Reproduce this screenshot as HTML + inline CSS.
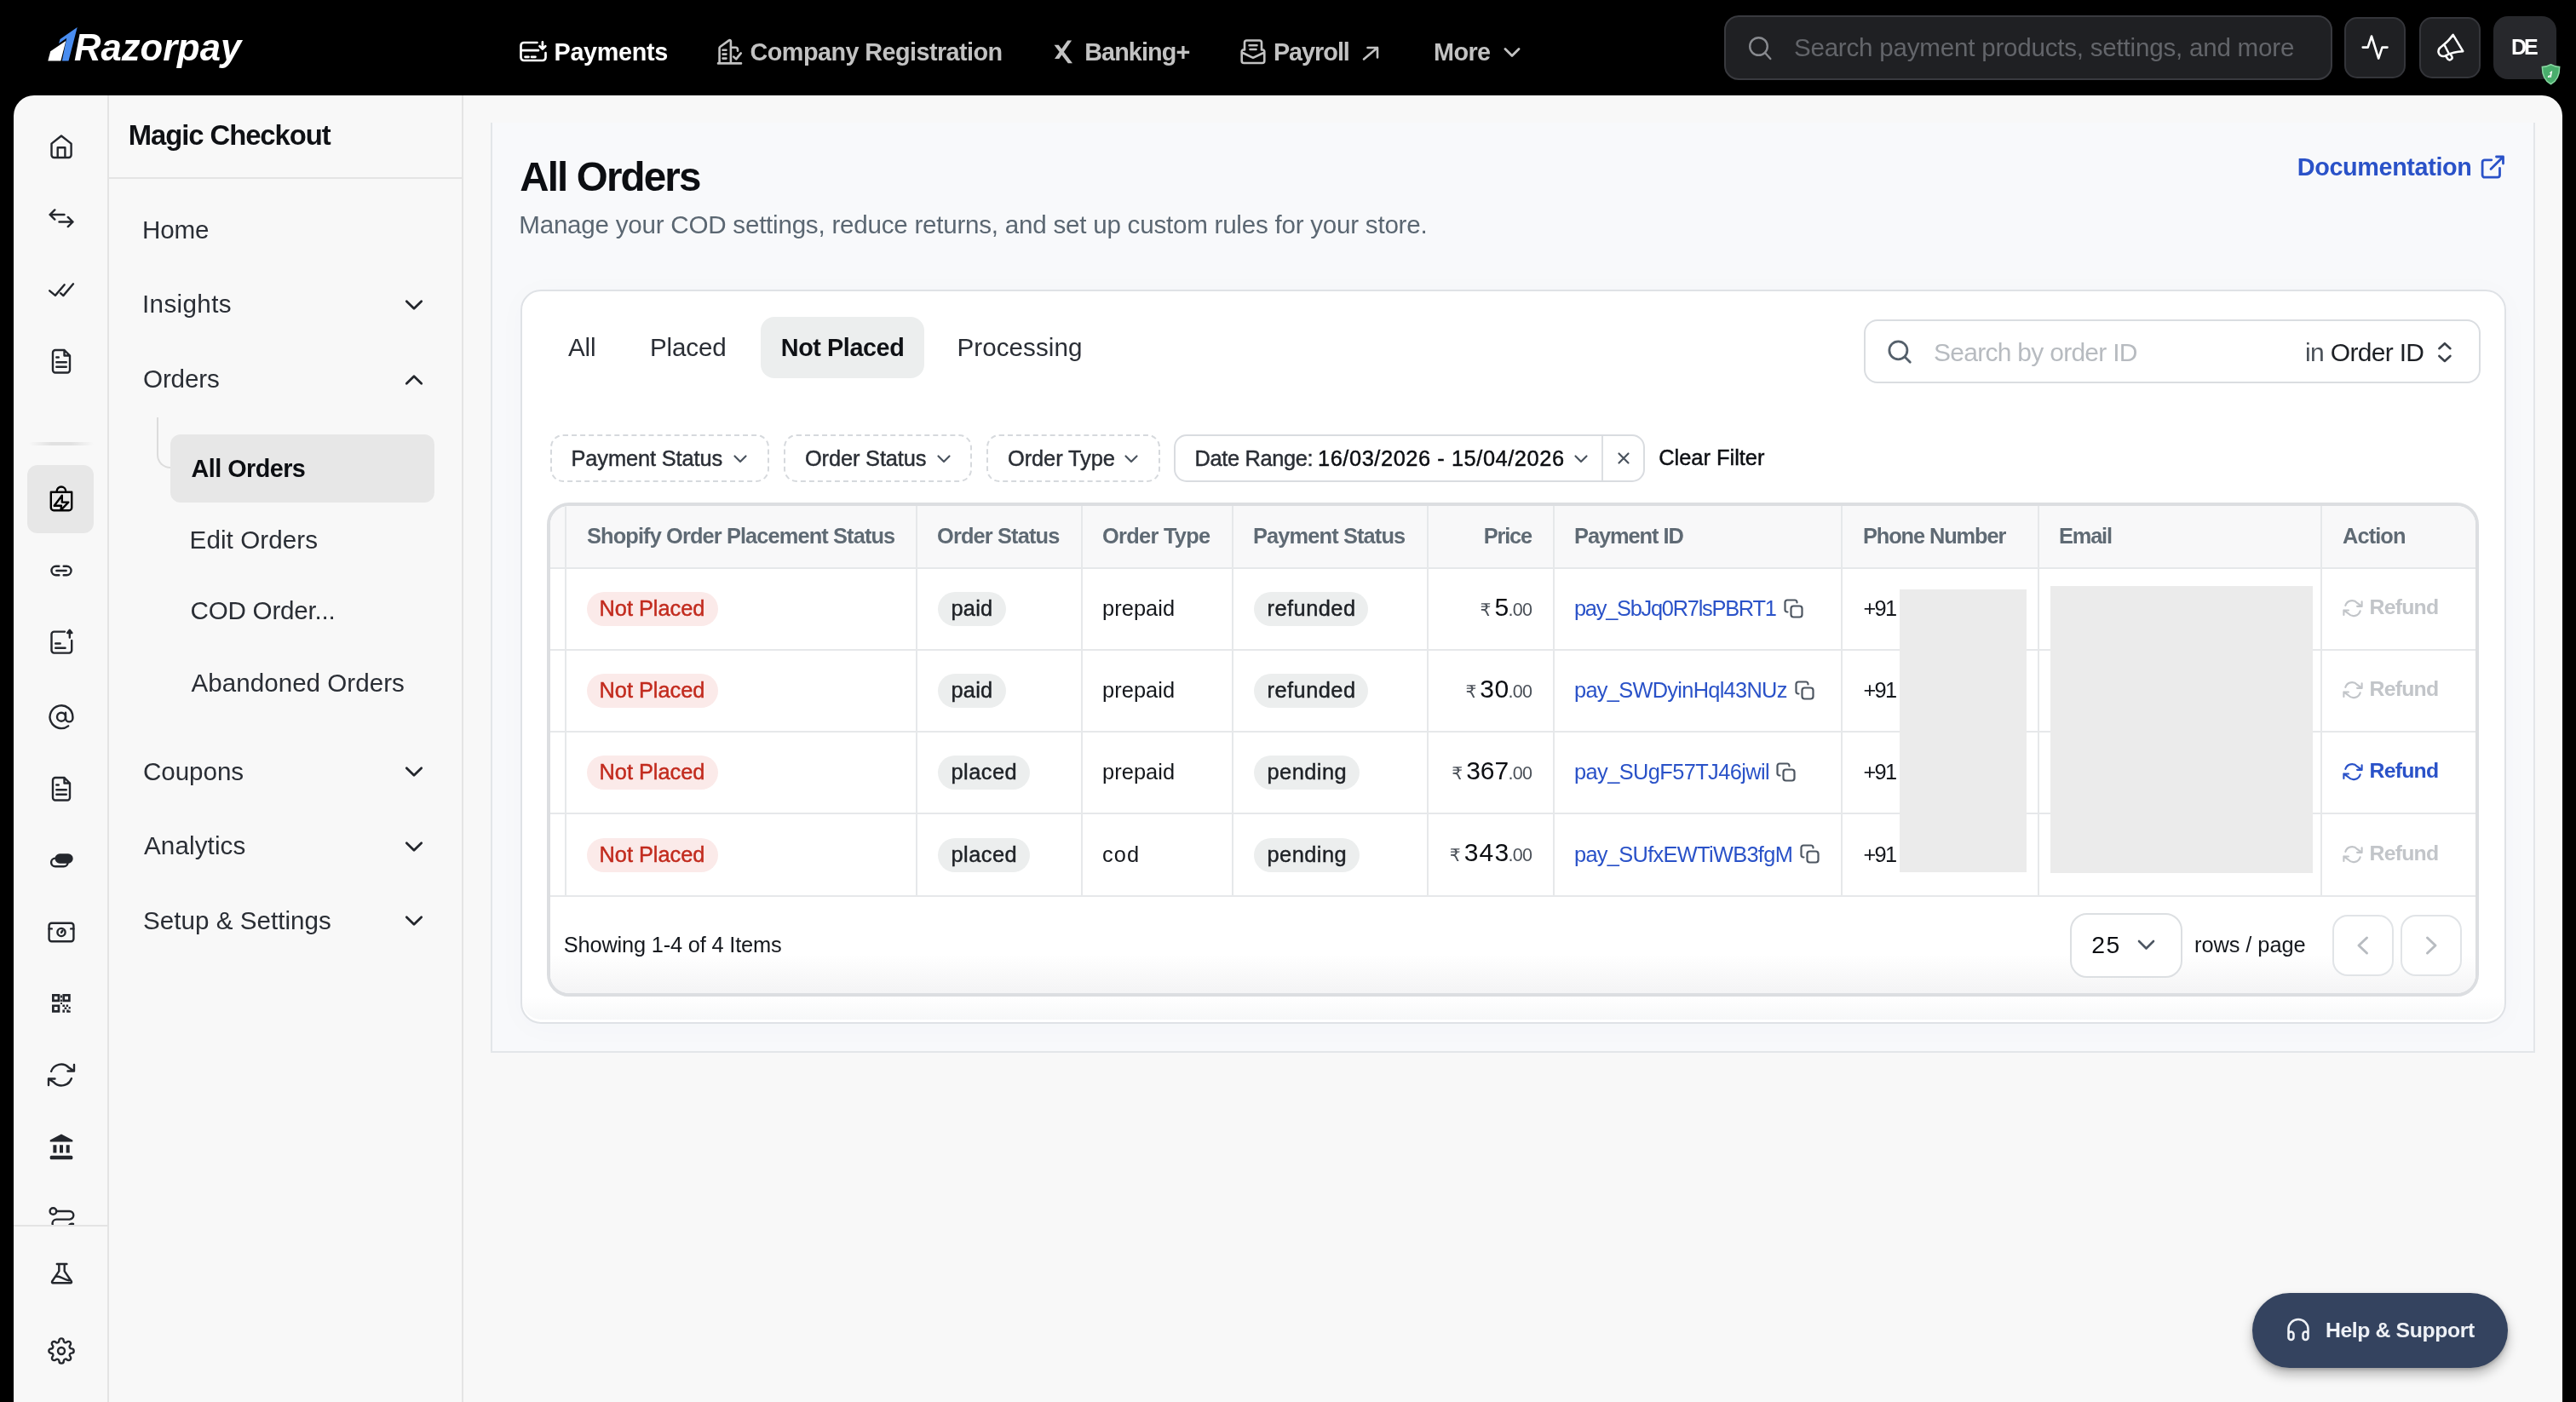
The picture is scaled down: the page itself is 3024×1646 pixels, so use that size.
<!DOCTYPE html>
<html lang="en">
<head>
<meta charset="utf-8">
<title>Magic Checkout - All Orders</title>
<style>
*{box-sizing:border-box;margin:0;padding:0}
html,body{width:3024px;height:1646px;overflow:hidden;background:#000}
body{font-family:"Liberation Sans","DejaVu Sans",sans-serif;color:#1b1e24;position:relative;-webkit-font-smoothing:antialiased;will-change:transform}
@media (max-width:1600px){html{zoom:.5}}
svg{display:block;overflow:visible}
button{font-family:inherit;border:none;text-align:left}
.ic{fill:none;stroke:currentColor;stroke-width:2;stroke-linecap:round;stroke-linejoin:round}
span{white-space:nowrap}
.md{-webkit-text-stroke:0.45px currentColor}

/* ---------- top bar ---------- */
#topbar{position:absolute;left:0;top:0;width:3024px;height:112px;background:#000;color:#fff}
#logo{position:absolute;left:55px;top:30px;width:236px;height:56px}
#logo .wm{position:absolute;left:32px;top:-2px;font-size:43.600px;line-height:56px;font-weight:bold;font-style:italic;color:#fff}
#topnav{position:absolute;left:0;top:0;height:112px;width:100%}
#topnav .ni{position:absolute;top:38px;height:46px;color:#c2c2c2;font-size:28.800px;line-height:46px;font-weight:bold;white-space:nowrap}
#topnav .ni.on{color:#fff}
#topnav .ni svg{position:absolute}
#gsearch{position:absolute;left:2024px;top:18px;width:714px;height:76px;border-radius:17px;background:#1f2023;border:2px solid #393a3f;color:#63656a;font-size:29.600px}
#gsearch svg{position:absolute;left:25px;top:20.500px;color:#888a8f}
#gsearch .t{position:absolute;left:80.900px;top:18px;line-height:36px}
.tbtn{position:absolute;top:20px;width:72px;height:72px;border-radius:15px;background:#1f2023;border:2px solid #34353a;color:#fff}
.tbtn svg{position:absolute;left:18px;top:18px}
#avatar{position:absolute;left:2927px;top:19px;width:74px;height:74px;border-radius:17px;background:#27282c;color:#fff;font-weight:bold;font-size:25px;line-height:73px;text-align:center}
#shield{position:absolute;left:2983px;top:75px;width:23px;height:24.500px}

/* ---------- shell ---------- */
#shell{position:absolute;left:16px;top:112px;width:2992px;height:1534px;background:#f8f8f8;border-radius:24px 24px 0 0;overflow:hidden}
#rail{position:absolute;left:0;top:0;width:112px;height:1534px;border-right:2px solid #e4e4e4}
#rail .ri{position:absolute;left:38px;width:36px;height:36px;color:#24272d;stroke-width:2.400}
#rail .act{position:absolute;left:16px;top:434px;width:78px;height:80px;border-radius:12px;background:#e7e7e7}
#rail .sep{position:absolute;left:18px;top:407px;width:76px;height:4px;border-radius:2px;background:linear-gradient(90deg,rgba(226,226,226,0),#e1e1e1 35%,#e1e1e1 65%,rgba(226,226,226,0))}
#railfoot{position:absolute;left:0;top:1326px;width:110px;height:208px;background:#f8f8f8;border-top:2px solid #e4e4e4}

#side{position:absolute;left:112px;top:0;width:416px;height:1534px;border-right:2px solid #e4e4e4}
#side h2{position:absolute;left:24.700px;top:27.200px;font-size:32.800px;line-height:40px;font-weight:bold;color:#0f1115;white-space:nowrap}
#side .hb{position:absolute;left:0;top:96px;width:414px;height:2px;background:#e4e4e4}
#side .mi{position:absolute;left:41px;font-size:29.600px;line-height:36px;color:#2a2e35;white-space:nowrap}
#side .si{position:absolute;left:96.600px;font-size:29.600px;line-height:36px;color:#2a2e35;white-space:nowrap}
#side .chev{position:absolute;left:344px;width:28px;height:28px;color:#24272d;stroke-width:2.800}
#side .sel{position:absolute;left:72px;top:398px;width:310px;height:80px;border-radius:12px;background:#e7e7e7}
#side .tree{position:absolute;left:56px;top:378px;width:16px;height:60px;border-left:2px solid #dcdcdc;border-bottom:2px solid #dcdcdc;border-bottom-left-radius:16px}

/* ---------- content ---------- */
#wrap{position:absolute;left:560px;top:32px;width:2400px;height:1092px;background:#f8f9fb;border:2px solid #e3e6e9;border-top:none}
#wrap h1{position:absolute;left:33.250px;top:35.500px;font-size:47.500px;line-height:56px;font-weight:bold;color:#0c0e12;white-space:nowrap}
#wrap .sub{position:absolute;left:33.250px;top:101.700px;font-size:29.600px;line-height:36px;color:#5b6772;white-space:nowrap}
#doc{position:absolute;right:73.700px;top:32px;height:40px;color:#2a52c8;font-weight:bold;font-size:28.800px;line-height:40px;white-space:nowrap}
#doc svg{position:absolute;right:-41px;top:5px}

#card{position:absolute;left:33px;top:196px;width:2331px;height:862px;background:linear-gradient(#fff 828px,#f6f7f8);border:2px solid #dfe2e6;border-radius:24px;box-shadow:0 4px 36px rgba(60,80,110,.025),inset 0 -3px 0 #fff}
.tab{position:absolute;top:30px;height:72px;line-height:72px;font-size:29.600px;color:#2a2e35;white-space:nowrap}
.tab.on{background:#eceeee;border-radius:16px;font-weight:bold;font-size:28.800px;color:#0f1115;text-align:center}
#osearch{position:absolute;left:1575px;top:33px;width:724px;height:75px;border-radius:16px;border:2px solid #dadde1;background:#fff}
#osearch svg.s{position:absolute;left:25px;top:21px;color:#55606b}
#osearch .ph{position:absolute;left:81.100px;top:17.500px;font-size:30px;line-height:38px;color:#b7bbc0}
#osearch .in{position:absolute;left:518.100px;top:17.500px;font-size:30px;line-height:38px;color:#1d2025}
#osearch svg.u{position:absolute;left:671px;top:22.600px;color:#3c424a}

.chip{position:absolute;top:168px;height:56px;border-radius:15px;border:2px dashed #d6d9dd;font-size:25.400px;line-height:50px;color:#2a2e35;white-space:nowrap}
.chip>span{position:absolute;left:24.500px;top:1px}
.chip svg{position:absolute;top:21.500px;color:#4a535e;stroke-width:2.200}
.chip.solid{border:2px solid #d9dce0}

/* table */
#tbl{position:absolute;left:29px;top:248px;width:2268px;height:580px;border:4px solid #dcdee1;border-radius:26px;background:#fff;overflow:hidden}
table{border-collapse:separate;border-spacing:0;table-layout:fixed;width:2260px;position:absolute;left:0;top:0}
th,td{border-right:2px solid #e6e8ea;border-bottom:2px solid #e6e8ea;text-align:left;vertical-align:middle;padding:0 0 0 24px;white-space:nowrap;overflow:hidden}
th{height:74px;background:#f8f8f9;color:#5f6a74;font-size:25.400px;font-weight:bold;padding-bottom:1px}
td{height:96px;font-size:25.400px;color:#15181d;line-height:40px;padding-bottom:2px}
th:last-child,td:last-child{border-right:none}
tr.last td{height:97px}
th.r{text-align:right;padding:0 24px 1px 0}
td.r{text-align:right;padding:0 24px 2px 0}
.bd{display:inline-block;height:40px;line-height:39px;border-radius:20px;padding:0 16.500px;font-size:25.400px;vertical-align:middle}
.bd.red{background:#fbeae9;color:#c22b1e}
.bd.gr{background:#eceeee;color:#1d2025}
.pid{color:#2a52c8;display:inline-flex;align-items:center}
.pid svg{margin-left:9px;color:#4d5661;position:relative;top:0.500px}
.rf{display:inline-flex;align-items:center;color:#c2c5c9;font-weight:bold;font-size:24.800px}
.rf.on{color:#2a52c8}
.rf svg{margin-right:8.500px;position:relative;left:0;top:1px}
.pr{display:inline-block;white-space:nowrap}
.pr .cu{font-size:20.300px;color:#4a5058;margin-right:5px;font-family:"DejaVu Sans",sans-serif}
.pr .iv{font-size:30px;color:#0c0e12}
.pr .dc{font-size:21.500px;color:#4a5058;margin-left:1px}
.red1{position:absolute;left:1583.500px;top:98px;width:149px;height:332px;background:#ebebeb}
.red2{position:absolute;left:1760.700px;top:93.500px;width:308px;height:337px;background:#ebebeb}
#tfoot{position:absolute;left:0;top:459px;width:2260px;height:113px;background:linear-gradient(#fff 60%,#f4f4f5)}
#tfoot .sh{position:absolute;left:16.800px;top:40px;font-size:25.400px;line-height:32px;color:#15181d}
#tfoot .sel{position:absolute;left:1783.500px;top:19px;width:132px;height:76px;border-radius:20px;border:2px solid #dcdfe2;background:#fff;font-size:28.400px;line-height:71px;color:#0c0e12}
#tfoot .sel span{position:absolute;left:24.750px;top:0}
#tfoot .sel svg{position:absolute;left:77.750px;top:29px;color:#4d5662}
#tfoot .rp{position:absolute;left:1931px;top:40.200px;font-size:25.400px;line-height:32px;color:#15181d}
.pb{position:absolute;top:21px;width:71.500px;height:72px;border-radius:18px;border:2px solid #e1e4e7;background:#fff;color:#b8bcc1}
.pb svg{position:absolute;left:20px;top:20px}

#help{position:absolute;left:2644px;top:1518px;width:300px;height:88px;border-radius:44px;background:#34435f;color:#eef1f6;font-weight:bold;font-size:24.800px;line-height:88px;box-shadow:0 8px 14px rgba(0,0,0,.26),0 2px 4px rgba(0,0,0,.18)}
#help svg{position:absolute;left:40px;top:29px}
#help span{position:absolute;left:86.900px;top:0}
</style>
</head>
<body>
<header id="topbar">
  <div id="logo">
    <svg width="236" height="56" viewBox="55 30 236 56" style="position:absolute;left:0;top:0">
      <polygon points="90.7,32 70.5,45.9 69.1,50.9 78.2,44.8 72.8,71.5 80.5,71.5" fill="#4a8df0"/>
      <polygon points="56.3,71.5 59.2,60.2 77.3,48 71.4,71.5" fill="#fff"/>
    </svg>
    <span class="wm"><span style="letter-spacing:0.00px;margin:0 2.75px 0 0.00px">Razorpay</span></span>
  </div>
  <nav id="topnav">
    <div class="ni on" style="left:610px;padding-left:41.600px">
      <svg width="34" height="28" viewBox="609 46 34 28" class="ic" style="left:-1px;top:8px;stroke-width:2.700"><path d="M630.500 50H615a3.500 3.500 0 0 0-3.500 3.500v14a3.500 3.500 0 0 0 3.500 3.500h22a3.500 3.500 0 0 0 3.500-3.500V62.200M611.500 59.200h20.500M616.500 66.800h4M624 66.800h4.500M636.900 49.300v7.500M633.500 54.300l3.400 3.300 3.400-3.300"/></svg>
      <span style="letter-spacing:-0.35px;margin:0 -0.67px 0 -1.00px">Payments</span></div>
    <div class="ni" style="left:842px;padding-left:39.600px">
      <svg width="32" height="32" viewBox="840 44 32 32" class="ic" style="left:-2px;top:6px;stroke-width:2.600"><path d="M843 74.400h27M844.600 74V56.200a1.500 1.500 0 0 1 .7-1.200l10.500-7.600a1.300 1.300 0 0 1 2.100 1V74M858 55.800h5.500a2.500 2.500 0 0 1 2.500 2.500v1.400M861.200 66.600l3 2.800 5.600-7M848.500 58.800h4M848.500 63.600h4M848.500 68.600h4"/></svg>
      <span style="letter-spacing:-0.56px;margin:0 -1.03px 0 -1.00px">Company Registration</span></div>
    <div class="ni" style="left:1237px;padding-left:37.200px">
      <svg width="26" height="30" viewBox="1236 46 26 30" style="left:-1px;top:8px"><path fill="currentColor" d="M1253.200 47.500h4.900l-14.800 21.500h-5.300zM1237.500 52.700h5.200l16.300 21.600h-5.200z"/></svg>
      <span style="letter-spacing:-0.91px;margin:0 0.10px 0 -1.00px">Banking+</span></div>
    <div class="ni" style="left:1456px;padding-left:39.900px">
      <svg width="34" height="34" viewBox="1454 44 34 34" class="ic" style="left:-2px;top:6px;stroke-width:2.600"><path d="M1461 58.500V50a2.500 2.500 0 0 1 2.500-2.500h15a2.500 2.500 0 0 1 2.500 2.500v8.500M1457.700 61.500l13.300 6.300 13.300-6.300M1457.700 61.500a2.500 2.500 0 0 1 3.300-3M1484.300 61.500a2.500 2.500 0 0 0-3.300-3M1457.700 61.500V71.500a2.500 2.500 0 0 0 2.500 2.500h21.600a2.500 2.500 0 0 0 2.500-2.500V61.500M1466.500 53.200h9M1467.500 58h7"/></svg>
      <span style="letter-spacing:-1.01px;margin:0 -0.99px 0 -1.00px">Payroll</span>
      <svg width="22" height="18" viewBox="1598 54 22 18" class="ic" style="left:142px;top:16px;stroke-width:2.600"><path d="M1601 69.500l16-13.500M1605.500 56h11.500v11.500"/></svg>
    </div>
    <div class="ni" style="left:1684px">
      <span style="letter-spacing:-0.59px;margin:0 0.58px 0 -1.00px">More</span>
      <svg width="22" height="14" viewBox="1764 54 22 14" class="ic" style="left:80px;top:16px;stroke-width:2.800"><path d="M1767 57.500l8 8 8-8"/></svg>
    </div>
  </nav>
  <div id="gsearch">
    <svg width="32" height="32" viewBox="0 0 32 32" class="ic" style="stroke-width:2.400"><circle cx="13.500" cy="13.500" r="10.300"/><path d="M21 21l6.300 7"/></svg>
    <span class="t"><span style="letter-spacing:-0.23px;margin:0 -0.23px 0 -1.00px">Search payment products, settings, and more</span></span>
  </div>
  <div class="tbtn" style="left:2752px"><svg width="36" height="36" viewBox="2770 36 36 36" class="ic" style="stroke-width:2.600;left:16px;top:15px"><path d="M2773.700 54.600h6l4.300-13.100 8.200 26.100 4.300-13h6"/></svg></div>
  <div class="tbtn" style="left:2840px"><svg width="36" height="36" viewBox="2858 36 36 36" class="ic" style="stroke-width:2.500;left:16px;top:14px"><path d="M2879.700 40.800L2891.300 60.200Q2880 60.500 2870.300 65.600Q2865.500 67.300 2863.100 63Q2860.800 58 2866.600 54.200Q2874.500 48.500 2879.700 40.800zM2869.800 53.200l5 9.800M2871 65.800l2.800 3.900q1.500 1.400 3.500 .100q2.200-1.500 1-3.500l-1.700-2.700"/></svg></div>
  <div id="avatar"><span style="letter-spacing:-3.05px;margin:0 2.38px 0 -1.00px">DE</span>
  </div>
  <svg id="shield" viewBox="0 0 24 26"><path d="M12 .8c3.500 2 6.800 2.800 10.800 2.800 0 9.500-2.500 17.200-10.800 21.600C3.700 20.800 1.200 13.100 1.200 3.600 5.200 3.600 8.500 2.800 12 .8z" fill="#49ad6c" stroke="#86d6a0" stroke-width="1.600"/><path d="M13.800 8.500l-3.400 2.400-.3 1.200 1.600-1.100-.9 6h1.500zM8 17l.5-1.900 2.500-1.700-.8 3.600z" fill="#fff"/></svg>
</header>

<div id="shell">
<nav id="rail">
  <svg class="ri ic" style="top:42px" viewBox="54 154 36 36"><path d="M60.500 168.600L72 159.500l11.600 9.100V182a3 3 0 0 1-3 3H63.500a3 3 0 0 1-3-3zM67.700 185v-11.700h8.700V185"/></svg>
  <svg class="ri ic" style="top:126px" viewBox="54 238 36 36"><path d="M75.500 252H58.600M64.300 246.400L58.600 252l5.700 5.600M69.500 260.500h16M79.800 254.900l5.700 5.600-5.700 5.600"/></svg>
  <svg class="ri ic" style="top:210px" viewBox="54 322 36 36"><path d="M58.200 341.300l6.700 5.600 10.800-12.600M71 344.200l3.300 2.900 11.700-13.800"/></svg>
  <svg class="ri ic" style="top:294px" viewBox="54 406 36 36"><path d="M75.500 411H65a3 3 0 0 0-3 3v20.500a3 3 0 0 0 3 3h14a3 3 0 0 0 3-3V417.500zM75.500 411v6.500H82M66.300 419.500h2.500M66.300 425.300h11.500M66.300 430.800h11.500"/></svg>
  <div class="sep"></div>
  <div class="act"></div>
  <svg class="ri ic" style="top:456px;color:#000" viewBox="54 568 36 36"><path d="M59.800 577.800h24.400V596a3.200 3.200 0 0 1-3.200 3.200H63a3.200 3.200 0 0 1-3.200-3.200zM66.600 577.800v-1a5.300 5.300 0 0 1 10.600 0v1M72.800 581.800L63.700 593.700H72l-.5 5.300 8.800-9.400h-7.500z"/></svg>
  <svg class="ri ic" style="top:540px" viewBox="54 652 36 36"><path d="M69.300 664.800h-3.600a5.250 5.250 0 0 0 0 10.500h3.600M74.700 664.800h3.600a5.250 5.250 0 0 1 0 10.500h-3.600M66.300 670h11.400"/></svg>
  <svg class="ri ic" style="top:624px" viewBox="54 736 36 36"><path d="M76 741.600H63.500a3 3 0 0 0-3 3v19a3 3 0 0 0 3 3h17.700a3 3 0 0 0 3-3V752M81.800 748.500v-8M65.200 755.500h5.500M65.200 760.700h11.400"/><path d="M79.200 743l2.600-3.200 2.600 3.200z" fill="currentColor"/></svg>
  <svg class="ri ic" style="top:708px" viewBox="54 820 36 36"><circle cx="72" cy="841.700" r="5"/><path d="M77 836.700v6.500a4.200 4.200 0 0 0 8.400 0v-1.500a13.400 13.400 0 1 0-5.250 10.640"/></svg>
  <svg class="ri ic" style="top:792px" viewBox="54 904 36 36"><path d="M75.500 913H65a3 3 0 0 0-3 3v20.500a3 3 0 0 0 3 3h14a3 3 0 0 0 3-3V919.500zM75.500 913v6.500H82M66.300 921.500h2.500M66.300 927.300h11.500M66.300 932.800h11.500"/></svg>
  <svg class="ri ic" style="top:876px" viewBox="54 988 36 36"><rect x="60.100" y="1007.600" width="19.500" height="9.600" rx="4.800"/><rect x="64.500" y="1002.300" width="21.200" height="11.400" rx="5.700" fill="currentColor" stroke="none"/></svg>
  <svg class="ri ic" style="top:960px" viewBox="54 1072 36 36"><rect x="57.600" y="1083.800" width="28.800" height="21.400" rx="3"/><circle cx="72" cy="1094.500" r="4.600"/><path d="M72 1094.700l1.500-2.200M57.600 1090.400h3.200M83.200 1090.400h3.200"/></svg>
  <svg class="ri" style="top:1048px;fill:currentColor" viewBox="54 1160 36 36"><path fill-rule="evenodd" d="M61 1167h9.300v9.300H61zm2.700 2.700v3.900h3.900v-3.900zM73.400 1167h9.300v9.300h-9.300zm2.700 2.700v3.900h3.900v-3.900zM61 1179.400h9.300v9.300H61zm2.700 2.700v3.900h3.900v-3.900z"/><path d="M70.900 1168.500h2v3h-2zM70.900 1173.500h2v2.500h-2zM73.400 1179.400h2.600v2.600h-2.600zM77.600 1179.400h2.500v2.600h-2.500zM80.600 1182h2.100v2.500h-2.100zM75.600 1182.500h2.600v2.600h-2.600zM73.400 1185.600h2.600v3.100h-2.600zM78.200 1185.600h2.500v3.100h-2.500zM80.700 1186.600h2v2.100h-2zM71 1177h2v2h-2z"/></svg>
  <svg class="ri ic" style="top:1132px" viewBox="54 1244 36 36"><path d="M87 1250v7.500h-7.500M57 1274v-7.500h7.500M60.100 1257.800a12.400 12.400 0 0 1 20.500-4.600l6.400 4.300M57 1266.500l6.400 4.300a12.400 12.400 0 0 0 20.500-4.600"/></svg>
  <svg class="ri" style="top:1216px;fill:currentColor" viewBox="54 1328 36 36"><path d="M72 1331.600l13.300 6.800v2.200H58.700v-2.200zM62.400 1344.200h4v9.200h-4zM70 1344.200h4v9.200h-4zM77.700 1344.200h4v9.200h-4z"/><rect x="58.700" y="1356.700" width="26.600" height="4.600" rx="1.500"/></svg>
  <svg class="ri ic" style="top:1300px" viewBox="54 1412 36 36"><circle cx="62.400" cy="1422" r="3.800"/><path d="M66.200 1422h15.300a4.800 4.800 0 0 1 0 9.600H66.300a4.800 4.800 0 0 0 0 9.600h9M80 1441a4.500 4.500 0 0 1 6-4"/></svg>
  <div id="railfoot">
    <svg class="ri ic" style="top:37px" viewBox="54 1477 36 36"><path d="M66.800 1484h11.600M69.300 1484v8.300l-8.200 12.200a1.200 1.200 0 0 0 1 1.800h20.800a1.200 1.200 0 0 0 1-1.800l-8.200-12.200V1484M65 1498.800c5-2 9 3.500 16 4.500"/></svg>
    <svg class="ri ic" style="top:130px;left:40px;width:32px;height:32px;stroke-width:1.800" viewBox="0 0 24 24"><circle cx="12" cy="12" r="3"/><path d="M19.400 15a1.650 1.650 0 0 0 .33 1.820l.06.06a2 2 0 0 1 0 2.830 2 2 0 0 1-2.830 0l-.06-.06a1.650 1.650 0 0 0-1.820-.33 1.650 1.650 0 0 0-1 1.510V21a2 2 0 0 1-2 2 2 2 0 0 1-2-2v-.09A1.650 1.650 0 0 0 9 19.400a1.650 1.650 0 0 0-1.820.33l-.06.06a2 2 0 0 1-2.830 0 2 2 0 0 1 0-2.830l.06-.06a1.650 1.650 0 0 0 .33-1.820 1.650 1.650 0 0 0-1.510-1H3a2 2 0 0 1-2-2 2 2 0 0 1 2-2h.09A1.650 1.650 0 0 0 4.600 9a1.650 1.650 0 0 0-.33-1.820l-.06-.06a2 2 0 0 1 0-2.830 2 2 0 0 1 2.830 0l.06.06a1.650 1.650 0 0 0 1.820.33H9a1.650 1.650 0 0 0 1-1.510V3a2 2 0 0 1 2-2 2 2 0 0 1 2 2v.09a1.650 1.650 0 0 0 1 1.510 1.650 1.650 0 0 0 1.820-.33l.06-.06a2 2 0 0 1 2.830 0 2 2 0 0 1 0 2.830l-.06.06a1.650 1.650 0 0 0-.33 1.820V9a1.650 1.650 0 0 0 1.510 1H21a2 2 0 0 1 2 2 2 2 0 0 1-2 2h-.09a1.650 1.650 0 0 0-1.510 1z"/></svg>
  </div>
</nav>
<aside id="side">
  <h2><span style="letter-spacing:-1.04px;margin:0 1.12px 0 -2.00px">Magic Checkout</span></h2>
  <div class="hb"></div>
  <div class="mi" style="top:139.700px"><span style="letter-spacing:-0.16px;margin:0 -0.30px 0 -2.00px">Home</span></div>
  <div class="mi" style="top:227.300px"><span style="letter-spacing:0.36px;margin:0 -1.16px 0 -2.00px">Insights</span></div>
  <svg class="chev ic" style="top:232px" viewBox="0 0 28 28"><path d="M5.300 9.700l8.700 8.600 8.700-8.600"/></svg>
  <div class="mi" style="top:315.300px"><span style="letter-spacing:-0.13px;margin:0 -0.67px 0 -1.00px">Orders</span></div>
  <svg class="chev ic" style="top:320px" viewBox="0 0 28 28"><path d="M5.300 18.300l8.700-8.600 8.700 8.600"/></svg>
  <div class="tree"></div>
  <div class="sel"></div>
  <div class="si" style="top:419.600px;font-weight:bold;font-size:28.800px;color:#0c0e12"><span style="letter-spacing:-0.55px;margin:0 -0.47px 0 0.00px">All Orders</span></div>
  <div class="si" style="top:503.700px"><span style="letter-spacing:0.07px;margin:0 -0.87px 0 -2.00px">Edit Orders</span></div>
  <div class="si" style="top:587.400px"><span style="letter-spacing:-0.24px;margin:0 -1.98px 0 -1.00px">COD Order...</span></div>
  <div class="si" style="top:671.700px"><span style="letter-spacing:0.01px;margin:0 -0.81px 0 0.00px">Abandoned Orders</span></div>
  <div class="mi" style="top:775.700px"><span style="letter-spacing:-0.06px;margin:0 -0.74px 0 -1.00px">Coupons</span></div>
  <svg class="chev ic" style="top:780px" viewBox="0 0 28 28"><path d="M5.300 9.700l8.700 8.600 8.700-8.600"/></svg>
  <div class="mi" style="top:863.300px"><span style="letter-spacing:0.11px;margin:0 -0.91px 0 0.00px">Analytics</span></div>
  <svg class="chev ic" style="top:868px" viewBox="0 0 28 28"><path d="M5.300 9.700l8.700 8.600 8.700-8.600"/></svg>
  <div class="mi" style="top:950.700px"><span style="letter-spacing:0.02px;margin:0 -0.82px 0 -1.00px">Setup &amp; Settings</span></div>
  <svg class="chev ic" style="top:955px" viewBox="0 0 28 28"><path d="M5.300 9.700l8.700 8.600 8.700-8.600"/></svg>
</aside>
<main id="wrap">
  <h1><span style="letter-spacing:-1.83px;margin:0 0.42px 0 -1.00px">All Orders</span></h1>
  <p class="sub"><span style="letter-spacing:-0.24px;margin:0 -1.98px 0 -2.00px">Manage your COD settings, reduce returns, and set up custom rules for your store.</span></p>
  <a id="doc"><span style="letter-spacing:-0.37px;margin:0 -1.22px 0 -1.00px">Documentation</span>
    <svg width="30" height="30" viewBox="2911 181 30 30" class="ic" style="stroke-width:2.800"><path d="M2934.500 197.500v8a2.700 2.700 0 0 1-2.700 2.700h-15a2.700 2.700 0 0 1-2.700-2.700v-15a2.700 2.700 0 0 1 2.700-2.700h8M2930.500 184h8v8M2924 198.500L2938.300 184.200"/></svg>
  </a>
  <section id="card">
    <div class="tab" style="left:54px"><span style="letter-spacing:-0.16px;margin:0 -1.42px 0 0.00px">All</span></div>
    <div class="tab" style="left:152px"><span style="letter-spacing:-0.16px;margin:0 -1.30px 0 -2.00px">Placed</span></div>
    <div class="tab on" style="left:280px;width:192px"><span style="letter-spacing:-0.44px;margin:0 -1.15px 0 -1.00px">Not Placed</span></div>
    <div class="tab" style="left:512.500px"><span style="letter-spacing:0.06px;margin:0 -1.52px 0 -2.00px">Processing</span></div>
    <div id="osearch">
      <svg class="s ic" width="30" height="30" viewBox="2215 398 30 30" style="stroke-width:2.800"><circle cx="2228.400" cy="411.300" r="10.500"/><path d="M2236.300 419.200l6 6"/></svg>
      <span class="ph"><span style="letter-spacing:-0.73px;margin:0 0.07px 0 -1.00px">Search by order ID</span></span>
      <span class="in"><span style="letter-spacing:-0.68px;margin:0 0.02px 0 -2.00px"><span style="color:#4a5058">in</span> Order ID</span></span>
      <svg class="u ic" width="18" height="26" viewBox="2861 400 18 26" style="stroke-width:2.600"><path d="M2863.400 409.200l6.500-6 6.500 6M2863.400 418l6.500 6 6.500-6"/></svg>
    </div>

    <div class="chip md" style="left:33px;width:257px"><span style="letter-spacing:-0.12px;margin:0 -0.58px 0 -2.00px">Payment Status</span><svg class="ic" width="16" height="10" viewBox="0 0 16 10" style="left:213px"><path d="M1.500 1.500l6.500 6.500 6.500-6.500"/></svg></div>
    <div class="chip md" style="left:306.500px;width:221px"><span style="letter-spacing:-0.14px;margin:0 -0.56px 0 -1.00px">Order Status</span><svg class="ic" width="16" height="10" viewBox="0 0 16 10" style="left:178px"><path d="M1.500 1.500l6.500 6.500 6.500-6.500"/></svg></div>
    <div class="chip md" style="left:544.500px;width:204px"><span style="letter-spacing:-0.07px;margin:0 -1.05px 0 -1.00px">Order Type</span><svg class="ic" width="16" height="10" viewBox="0 0 16 10" style="left:160.500px"><path d="M1.500 1.500l6.500 6.500 6.500-6.500"/></svg></div>
    <div class="chip md solid" style="left:765px;width:553px">
      <span style="letter-spacing:-0.35px;margin:0 -1.70px 0 -2.00px">Date Range:</span>
      <span style="left:168px;color:#0c0e12"><span style="letter-spacing:0.56px;margin:0 -1.68px 0 -1.00px">16/03/2026 - 15/04/2026</span></span>
      <svg class="ic" width="16" height="10" viewBox="0 0 16 10" style="left:468px"><path d="M1.500 1.500l6.500 6.500 6.500-6.500"/></svg>
      <i style="position:absolute;left:500px;top:0;width:2px;height:52px;background:#dcdfe3"></i>
      <svg class="ic" width="16" height="16" viewBox="0 0 16 16" style="left:518px;top:18px"><path d="M2.500 2.500l11 11M13.500 2.500l-11 11"/></svg>
    </div>
    <div class="md" style="position:absolute;left:1335.250px;top:178.700px;font-size:25.400px;line-height:32px;color:#0c0e12;white-space:nowrap"><span style="letter-spacing:0.00px;margin:0 0.54px 0 -1.00px">Clear Filter</span></div>
    <div id="tbl">
<table>
<colgroup><col style="width:19px"><col style="width:412px"><col style="width:194px"><col style="width:177px"><col style="width:229px"><col style="width:148px"><col style="width:338px"><col style="width:231px"><col style="width:332px"><col style="width:180px"></colgroup>
<thead><tr><th style="padding:0"></th><th><span style="letter-spacing:-0.89px;margin:0 0.77px 0 0.00px">Shopify Order Placement Status</span></th><th><span style="letter-spacing:-0.86px;margin:0 0.74px 0 -1.00px">Order Status</span></th><th><span style="letter-spacing:-0.72px;margin:0 0.60px 0 -1.00px">Order Type</span></th><th><span style="letter-spacing:-0.87px;margin:0 0.75px 0 -1.00px">Payment Status</span></th><th class="r"><span style="letter-spacing:-1.19px;margin:0 1.06px 0 -1.00px">Price</span></th><th><span style="letter-spacing:-1.05px;margin:0 0.71px 0 -1.00px">Payment ID</span></th><th style="padding-left:25px"><span style="letter-spacing:-1.11px;margin:0 1.23px 0 -1.00px">Phone Number</span></th><th><span style="letter-spacing:-1.17px;margin:0 0.12px 0 -1.00px">Email</span></th><th><span style="letter-spacing:-0.90px;margin:0 -0.61px 0 0.00px">Action</span></th></tr></thead>
<tbody>
<tr><td style="padding:0"></td><td><span class="bd red md"><span style="letter-spacing:-0.04px;margin:0 -1.08px 0 -2.00px">Not Placed</span></span></td><td><span class="bd gr md"><span style="letter-spacing:0.21px;margin:0 -1.33px 0 -1.00px">paid</span></span></td><td><span style="letter-spacing:0.07px;margin:0 -1.19px 0 -1.00px">prepaid</span></td><td><span class="bd gr md"><span style="letter-spacing:0.48px;margin:0 -1.60px 0 -1.00px">refunded</span></span></td><td class="r"><span class="pr"><span class="cu">&#8377;</span><span class="iv"><span style="letter-spacing:-0.60px;margin:0 -0.08px 0 -1.00px">5</span></span><span class="dc"><span style="letter-spacing:-0.72px;margin:0 0.76px 0 -1.00px">.00</span></span></span></td><td><span class="pid"><span style="letter-spacing:-1.26px;margin:0 0.14px 0 -1.00px">pay_SbJq0R7lsPBRT1</span><svg class="ic" width="24" height="24" viewBox="0 0 24 24" style="stroke-width:2.200"><rect x="8.500" y="8.500" width="13" height="13" rx="3"/><path d="M4.500 15.500h-.500a2.500 2.500 0 0 1-2.500-2.500v-9A2.500 2.500 0 0 1 4 1.500h9A2.500 2.500 0 0 1 15.500 4v.500"/></svg></span></td><td style="padding-left:25.500px"><span style="letter-spacing:-1.72px;margin:0 0.60px 0 -1.00px">+91</span></td><td></td><td><span class="rf"><svg class="ic" width="24" height="20.300" viewBox="0 0 26 22" style="stroke-width:2.300"><path d="M24.500 2.500v6h-6M1.500 19.500v-6h6M3.600 7.500a8.800 8.800 0 0 1 15-3.200l5.900 4.200M1.500 13.500l5.900 4.200a8.800 8.800 0 0 0 15-3.200"/></svg><span style="letter-spacing:-0.75px;margin:0 -0.40px 0 -1.00px">Refund</span></span></td></tr>
<tr><td style="padding:0"></td><td><span class="bd red md"><span style="letter-spacing:-0.04px;margin:0 -1.08px 0 -2.00px">Not Placed</span></span></td><td><span class="bd gr md"><span style="letter-spacing:0.21px;margin:0 -1.33px 0 -1.00px">paid</span></span></td><td><span style="letter-spacing:0.07px;margin:0 -1.19px 0 -1.00px">prepaid</span></td><td><span class="bd gr md"><span style="letter-spacing:0.48px;margin:0 -1.60px 0 -1.00px">refunded</span></span></td><td class="r"><span class="pr"><span class="cu">&#8377;</span><span class="iv"><span style="letter-spacing:0.52px;margin:0 -1.20px 0 -1.00px">30</span></span><span class="dc"><span style="letter-spacing:-0.72px;margin:0 0.76px 0 -1.00px">.00</span></span></span></td><td><span class="pid"><span style="letter-spacing:-0.71px;margin:0 0.01px 0 -1.00px">pay_SWDyinHql43NUz</span><svg class="ic" width="24" height="24" viewBox="0 0 24 24" style="stroke-width:2.200"><rect x="8.500" y="8.500" width="13" height="13" rx="3"/><path d="M4.500 15.500h-.500a2.500 2.500 0 0 1-2.500-2.500v-9A2.500 2.500 0 0 1 4 1.500h9A2.500 2.500 0 0 1 15.500 4v.500"/></svg></span></td><td style="padding-left:25.500px"><span style="letter-spacing:-1.72px;margin:0 0.60px 0 -1.00px">+91</span></td><td></td><td><span class="rf"><svg class="ic" width="24" height="20.300" viewBox="0 0 26 22" style="stroke-width:2.300"><path d="M24.500 2.500v6h-6M1.500 19.500v-6h6M3.600 7.500a8.800 8.800 0 0 1 15-3.200l5.900 4.200M1.500 13.500l5.900 4.200a8.800 8.800 0 0 0 15-3.200"/></svg><span style="letter-spacing:-0.75px;margin:0 -0.40px 0 -1.00px">Refund</span></span></td></tr>
<tr><td style="padding:0"></td><td><span class="bd red md"><span style="letter-spacing:-0.04px;margin:0 -1.08px 0 -2.00px">Not Placed</span></span></td><td><span class="bd gr md"><span style="letter-spacing:0.46px;margin:0 -1.58px 0 -1.00px">placed</span></span></td><td><span style="letter-spacing:0.07px;margin:0 -1.19px 0 -1.00px">prepaid</span></td><td><span class="bd gr md"><span style="letter-spacing:0.46px;margin:0 -1.58px 0 -1.00px">pending</span></span></td><td class="r"><span class="pr"><span class="cu">&#8377;</span><span class="iv"><span style="letter-spacing:-0.03px;margin:0 -0.65px 0 -1.00px">367</span></span><span class="dc"><span style="letter-spacing:-0.72px;margin:0 0.76px 0 -1.00px">.00</span></span></span></td><td><span class="pid"><span style="letter-spacing:-0.60px;margin:0 -1.04px 0 -1.00px">pay_SUgF57TJ46jwil</span><svg class="ic" width="24" height="24" viewBox="0 0 24 24" style="stroke-width:2.200"><rect x="8.500" y="8.500" width="13" height="13" rx="3"/><path d="M4.500 15.500h-.500a2.500 2.500 0 0 1-2.500-2.500v-9A2.500 2.500 0 0 1 4 1.500h9A2.500 2.500 0 0 1 15.500 4v.500"/></svg></span></td><td style="padding-left:25.500px"><span style="letter-spacing:-1.72px;margin:0 0.60px 0 -1.00px">+91</span></td><td></td><td><span class="rf on"><svg class="ic" width="24" height="20.300" viewBox="0 0 26 22" style="stroke-width:2.300"><path d="M24.500 2.500v6h-6M1.500 19.500v-6h6M3.600 7.500a8.800 8.800 0 0 1 15-3.200l5.900 4.200M1.500 13.500l5.900 4.200a8.800 8.800 0 0 0 15-3.200"/></svg><span style="letter-spacing:-0.75px;margin:0 -0.40px 0 -1.00px">Refund</span></span></td></tr>
<tr class="last"><td style="padding:0"></td><td><span class="bd red md"><span style="letter-spacing:-0.04px;margin:0 -1.08px 0 -2.00px">Not Placed</span></span></td><td><span class="bd gr md"><span style="letter-spacing:0.46px;margin:0 -1.58px 0 -1.00px">placed</span></span></td><td><span style="letter-spacing:1.09px;margin:0 -2.21px 0 -1.00px">cod</span></td><td><span class="bd gr md"><span style="letter-spacing:0.46px;margin:0 -1.58px 0 -1.00px">pending</span></span></td><td class="r"><span class="pr"><span class="cu">&#8377;</span><span class="iv"><span style="letter-spacing:1.22px;margin:0 -1.90px 0 -1.00px">343</span></span><span class="dc"><span style="letter-spacing:-0.72px;margin:0 0.76px 0 -1.00px">.00</span></span></span></td><td><span class="pid"><span style="letter-spacing:-0.69px;margin:0 -0.46px 0 -1.00px">pay_SUfxEWTiWB3fgM</span><svg class="ic" width="24" height="24" viewBox="0 0 24 24" style="stroke-width:2.200"><rect x="8.500" y="8.500" width="13" height="13" rx="3"/><path d="M4.500 15.500h-.500a2.500 2.500 0 0 1-2.500-2.500v-9A2.500 2.500 0 0 1 4 1.500h9A2.500 2.500 0 0 1 15.500 4v.500"/></svg></span></td><td style="padding-left:25.500px"><span style="letter-spacing:-1.72px;margin:0 0.60px 0 -1.00px">+91</span></td><td></td><td><span class="rf"><svg class="ic" width="24" height="20.300" viewBox="0 0 26 22" style="stroke-width:2.300"><path d="M24.500 2.500v6h-6M1.500 19.500v-6h6M3.600 7.500a8.800 8.800 0 0 1 15-3.200l5.900 4.200M1.500 13.500l5.900 4.200a8.800 8.800 0 0 0 15-3.200"/></svg><span style="letter-spacing:-0.75px;margin:0 -0.40px 0 -1.00px">Refund</span></span></td></tr>
</tbody>
</table>
<div class="red1"></div><div class="red2"></div>
<div id="tfoot">
  <span class="sh"><span style="letter-spacing:-0.18px;margin:0 -0.51px 0 -1.00px">Showing 1-4 of 4 Items</span></span>
  <div class="sel"><span style="letter-spacing:1.46px;margin:0 -2.25px 0 -1.00px">25</span><svg class="ic" width="22" height="14" viewBox="0 0 22 14" style="stroke-width:2.600"><path d="M2 2l8.500 8.500 8.500-8.500"/></svg></div>
  <span class="rp"><span style="letter-spacing:-0.06px;margin:0 -1.06px 0 -1.00px">rows / page</span></span>
  <div class="pb" style="left:2092px"><svg class="ic" width="28" height="28" viewBox="0 0 28 28" style="stroke-width:3"><path d="M18.500 5l-9.500 9 9.500 9"/></svg></div>
  <div class="pb" style="left:2172px"><svg class="ic" width="28" height="28" viewBox="0 0 28 28" style="stroke-width:3"><path d="M9.500 5l9.500 9-9.500 9"/></svg></div>
</div>
</div>

  </section>
</main>
</div>

<button id="help"><svg class="ic" width="28" height="28" viewBox="0 0 28 28" style="stroke-width:2.600"><path d="M2.500 22v-8.500a11.500 11.500 0 0 1 23 0V22M2.500 19.500a3 3 0 0 1 6 0v3.500a3 3 0 0 1-6 0zM19.500 19.500a3 3 0 0 1 6 0v3.500a3 3 0 0 1-6 0z"/></svg><span style="letter-spacing:-0.40px;margin:0 0.14px 0 -1.00px">Help &amp; Support</span></button>

</body>
</html>
